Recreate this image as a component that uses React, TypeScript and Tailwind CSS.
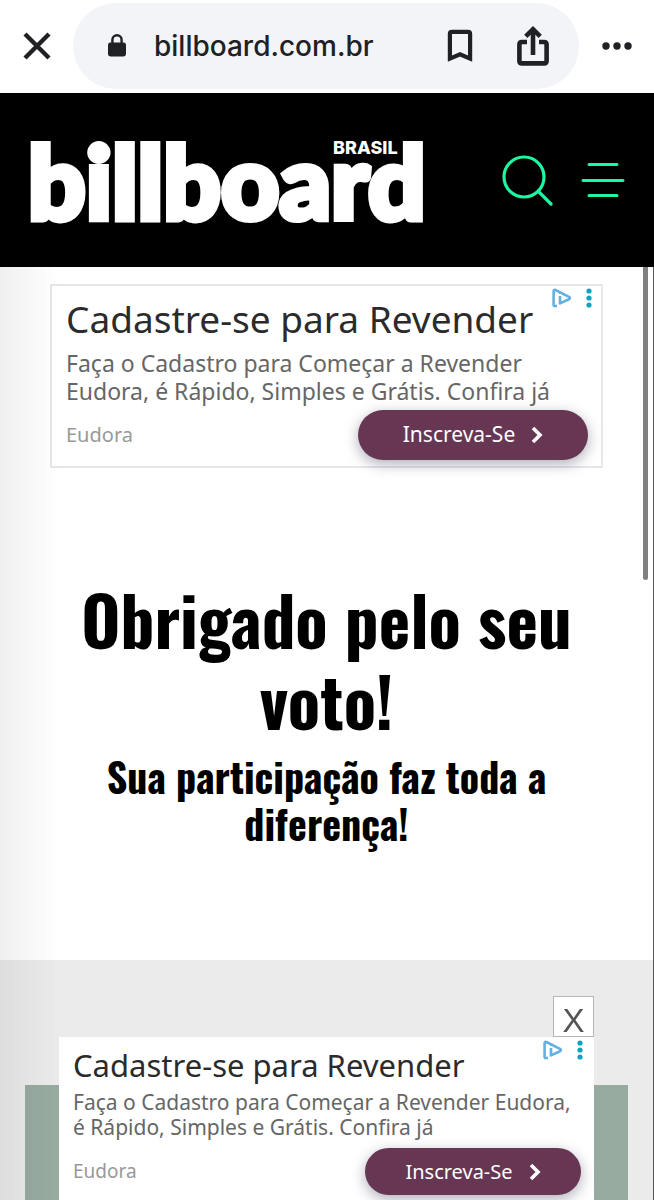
import React from 'react';
import clsx from 'clsx';

type AdProps = {
  lines: string[];
  large?: boolean;
};

function AdMarks({ className }: { className: string }) {
  return (
    <div className={clsx('absolute flex items-center', className)}>
      <button type="button" aria-label="AdChoices" className="block">
        <svg width="20" height="20" viewBox="0 0 20 20" fill="none">
          <path
            d="M5 18H3Q1.6 18 1.6 16.4V3.4Q1.6 1.2 3.4 2L17 8.8Q18.8 10 17 11.2L8 15.4V8"
            stroke="#63b0e2"
            strokeWidth="2.6"
            strokeLinejoin="round"
          />
          <path d="M8 8v5.5M8 4.6v1.4" stroke="#63b0e2" strokeWidth="2" />
        </svg>
      </button>
      <button type="button" aria-label="Ad options" className="ml-[14px] block">
        <svg width="6" height="20" viewBox="0 0 6 20" fill="#0fa3bd">
          <circle cx="3" cy="3" r="2.6" />
          <circle cx="3" cy="10" r="2.6" />
          <circle cx="3" cy="17" r="2.6" />
        </svg>
      </button>
    </div>
  );
}

function Ad({ lines, large }: AdProps) {
  return (
    <div className="font-['Noto_Sans',sans-serif]">
      <h2 className={clsx('whitespace-nowrap text-[#2b2b2b]', large ? 'text-[37px] leading-[48px]' : 'text-[31px] leading-[40px]')}>
        Cadastre-se para Revender
      </h2>
      <p
        className={clsx(
          'whitespace-nowrap text-[#666]',
          large ? 'mt-[6px] text-[23px] leading-[28px]' : 'mt-[5px] text-[21px] leading-[25px]'
        )}
      >
        {lines.map((line) => (
          <span key={line} className="block">
            {line}
          </span>
        ))}
      </p>
      <div className={clsx('flex items-center justify-between', large ? 'mt-[5px]' : 'mt-2')}>
        <span className={clsx('text-[#999]', large ? 'text-[20px]' : 'text-[19px]')}>Eudora</span>
        <a
          href="#inscreva-se"
          className={clsx(
            'flex items-center justify-center gap-4 rounded-full bg-[#673653] text-white shadow-[0_4px_14px_rgba(50,50,80,0.4)]',
            large ? 'h-[50px] w-[230px] text-[21px]' : 'h-[47px] w-[216px] text-[20px]'
          )}
        >
          Inscreva-Se
          <svg width="12" height="18" viewBox="0 0 12 18" fill="none" stroke="currentColor" strokeWidth="3.6">
            <path d="M2 2l7 7-7 7" />
          </svg>
        </a>
      </div>
    </div>
  );
}

function BrowserBar() {
  return (
    <div className="flex h-[93px] items-center bg-white pb-[2px] text-[#202124]">
      <button type="button" aria-label="Close" className="flex w-[73px] shrink-0 justify-center">
        <svg width="28" height="28" viewBox="0 0 28 28" fill="none" stroke="currentColor" strokeWidth="4.4">
          <path d="M2 2l24 24M26 2L2 26" />
        </svg>
      </button>
      <div className="flex h-[86px] flex-1 items-center rounded-full bg-[#f3f4f7] pl-[35px] pr-[30px]">
        <svg width="18" height="23" viewBox="0 0 18 23" fill="none" className="shrink-0">
          <rect x="0" y="8.5" width="18" height="14" rx="2.4" fill="currentColor" />
          <path d="M4.4 9V5.8a4.6 4.6 0 0 1 9.2 0V9" stroke="currentColor" strokeWidth="2.4" />
        </svg>
        <span className="ml-7 font-['Inter',sans-serif] text-[28px] font-medium">billboard.com.br</span>
        <button type="button" aria-label="Bookmark" className="ml-auto">
          <svg width="26" height="34" viewBox="0 0 26 34" fill="none" stroke="currentColor" strokeWidth="4.2">
            <path d="M2.9 29.6V5Q2.9 2.9 5 2.9H21Q23.1 2.9 23.1 5V29.6L13 25.2Z" />
          </svg>
        </button>
        <button type="button" aria-label="Share" className="ml-[44px]">
          <svg width="32" height="42" viewBox="0 0 32 42" fill="none" stroke="currentColor" strokeWidth="4.6">
            <path d="M10 17H5Q2.4 17 2.4 19.4V36Q2.4 38.4 5 38.4H27Q29.6 38.4 29.6 36V19.4Q29.6 17 27 17H22" />
            <path d="M16 30V4M8.8 11.4L16 4.2l7.2 7.2" />
          </svg>
        </button>
      </div>
      <button type="button" aria-label="More" className="flex w-[75px] shrink-0 justify-center">
        <svg width="30" height="8" viewBox="0 0 30 8" fill="currentColor">
          <circle cx="4" cy="4" r="3.7" />
          <circle cx="15" cy="4" r="3.7" />
          <circle cx="26" cy="4" r="3.7" />
        </svg>
      </button>
    </div>
  );
}

function SiteHeader() {
  return (
    <header className="flex h-[174px] items-center bg-black pl-[28px] pr-[29px] text-[#1df7a2]">
      <a href="#home" aria-label="Billboard Brasil" className="relative block text-white">
        <span className="block font-['Lato',sans-serif] text-[101px] font-black leading-[96px] [-webkit-text-stroke:6px_white]">
          billboard
        </span>
        <span className="absolute right-[28px] top-[6px] font-['Inter',sans-serif] text-[18px] font-extrabold leading-[20px]">
          BRASIL
        </span>
      </a>
      <button type="button" aria-label="Buscar" className="ml-auto">
        <svg width="52" height="52" viewBox="0 0 52 52" fill="none" stroke="currentColor" strokeWidth="3.2" strokeLinecap="round">
          <circle cx="23" cy="23" r="20" />
          <path d="M37.5 37.5L50 50" />
        </svg>
      </button>
      <button type="button" aria-label="Menu" className="ml-7">
        <svg width="44" height="36" viewBox="0 0 44 36" fill="none" stroke="currentColor" strokeWidth="3" strokeLinecap="round">
          <path d="M8 2.5H36M2 18.5H42M8 33.5H36" />
        </svg>
      </button>
    </header>
  );
}

export default function App() {
  return (
    <div className="flex h-screen flex-col overflow-hidden bg-white">
      <BrowserBar />
      <SiteHeader />

      <main className="relative flex flex-1 flex-col border-r border-[#555]">
        {/* Top banner */}
        <section className="relative mx-[50px] mt-[17px] h-[184px] border-2 border-[#e6e7eb] pl-[14px] pr-[13px] pt-[9px]">
          <AdMarks className="right-[9px] top-[2px]" />
          <Ad large lines={['Faça o Cadastro para Começar a Revender', 'Eudora, é Rápido, Simples e Grátis. Confira já']} />
        </section>

        {/* Thank-you message */}
        <section className="flex h-[492px] shrink-0 flex-col px-16 pt-[110px] text-center font-['Oswald',sans-serif] font-bold text-black">
          <h1 className="text-[67px] leading-[81px]">Obrigado pelo seu voto!</h1>
          <p className="mt-[13px] text-[40px] leading-[47px]">Sua participação faz toda a diferença!</p>
        </section>

        <section className="flex-1 bg-[#ebebeb] px-[25px] pt-[125px]">
          <div className="h-full bg-[#98aba1]" />
        </section>

        {/* Edge shade and scroll thumb */}
        <div className="pointer-events-none absolute inset-y-0 left-0 w-[60px] bg-linear-to-r from-black/6 to-transparent" />
        <div className="absolute right-[5px] top-0 h-[313px] w-[5px] rounded-b-full bg-[#808080]" />
      </main>

      {/* Sticky bottom banner */}
      <aside className="fixed bottom-0 left-[59px] right-[60px] flex flex-col items-end">
        <button
          type="button"
          className="flex size-[41px] items-end justify-center border border-[#b5b5b5] bg-white font-['Liberation_Sans',sans-serif] text-[33px] leading-[30px] text-[#555]"
        >
          X
        </button>
        <div className="relative w-full bg-white pb-[5px] pl-[14px] pr-[13px] pt-[8px]">
          <AdMarks className="right-[11px] top-[3px]" />
          <Ad lines={['Faça o Cadastro para Começar a Revender Eudora,', 'é Rápido, Simples e Grátis. Confira já']} />
        </div>
      </aside>
    </div>
  );
}
